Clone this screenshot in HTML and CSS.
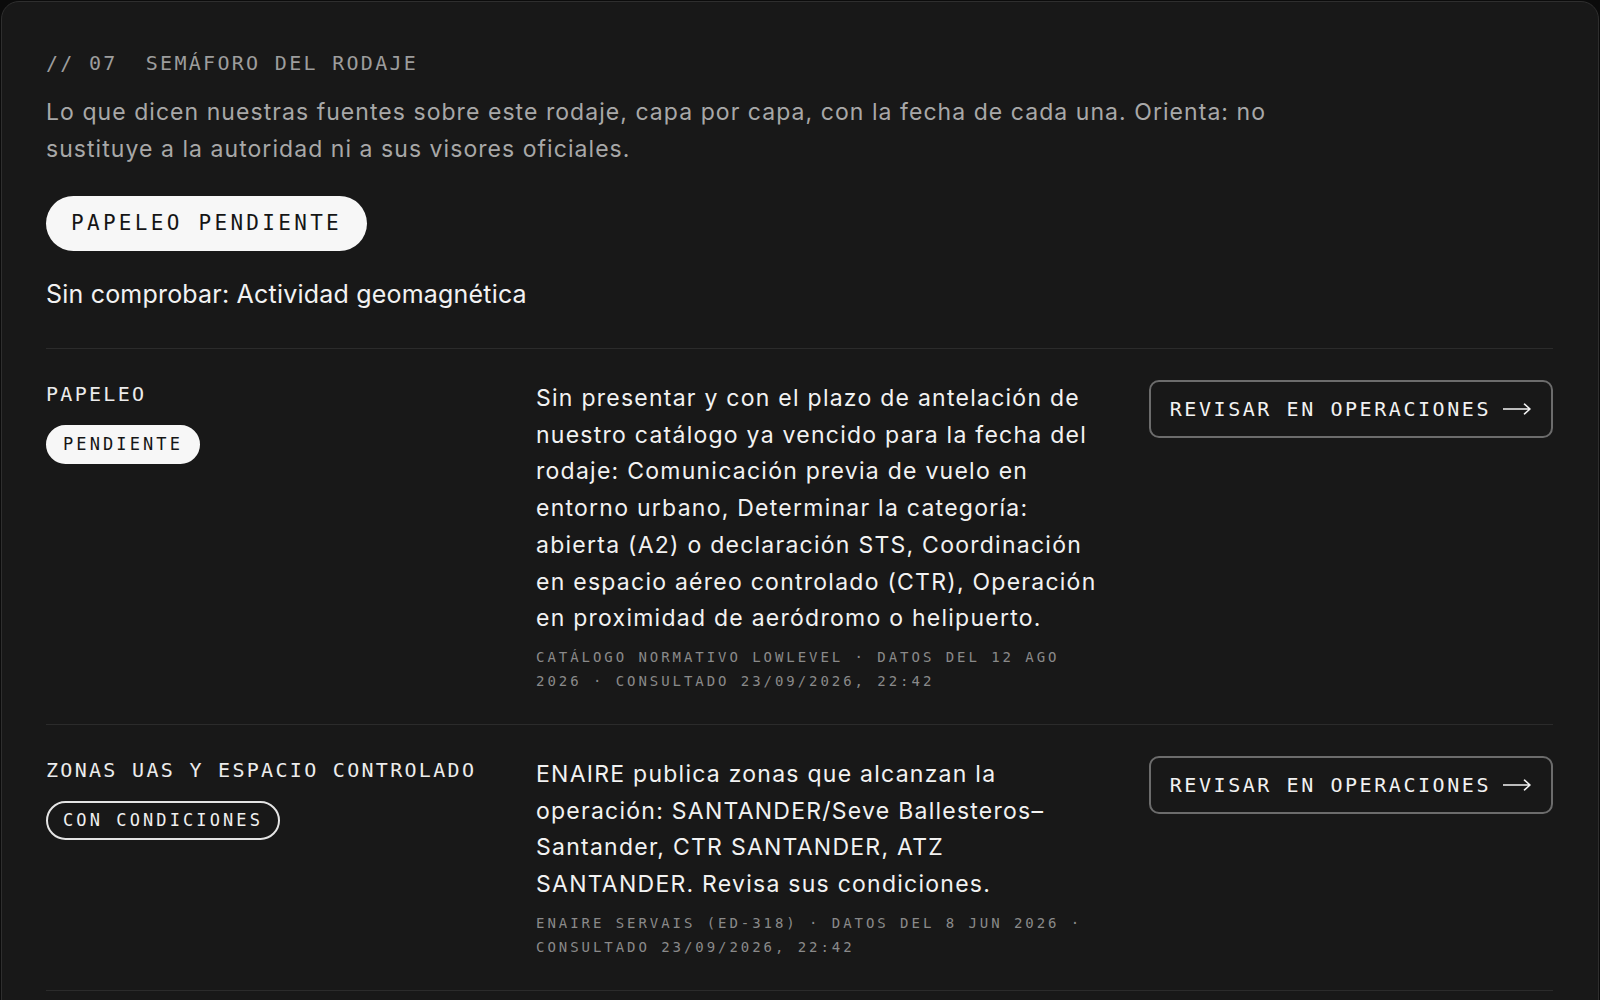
FILE: index.html
```html
<!DOCTYPE html>
<html lang="es">
<head>
<meta charset="utf-8">
<title>Semáforo del rodaje</title>
<link rel="stylesheet" href="styles.css">
</head>
<body>
<section class="card">
  <h2 class="eyebrow"><span>// 07</span><span>Semáforo del rodaje</span></h2>
  <p class="lede">Lo que dicen nuestras fuentes sobre este rodaje, capa por capa, con la fecha de cada una. Orienta: no sustituye a la autoridad ni a sus visores oficiales.</p>
  <div class="status"><span class="status-pill">Papeleo pendiente</span></div>
  <p class="unchecked">Sin comprobar: Actividad geomagnética</p>

  <div class="rows">
    <div class="row">
      <div class="row-head">
        <div class="row-label">Papeleo</div>
        <span class="tag tag-filled">Pendiente</span>
      </div>
      <div class="row-body">
        <p class="desc">Sin presentar y con el plazo de antelación de nuestro catálogo ya vencido para la fecha del rodaje: Comunicación previa de vuelo en entorno urbano, Determinar la categoría: abierta (A2) o declaración STS, Coordinación en espacio aéreo controlado (CTR), Operación en proximidad de aeródromo o helipuerto.</p>
        <p class="meta">Catálogo normativo LowLevel · datos del 12 ago 2026 · consultado 23/09/2026, 22:42</p>
      </div>
      <a class="action" href="#"><span>Revisar en operaciones</span><svg class="arrow" width="28" height="12" viewBox="0 0 28 12" aria-hidden="true"><path d="M0 6H27M21.5 1.2L27 6L21.5 10.8"/></svg></a>
    </div>

    <div class="row">
      <div class="row-head">
        <div class="row-label">Zonas UAS y espacio controlado</div>
        <span class="tag tag-outline">Con condiciones</span>
      </div>
      <div class="row-body">
        <p class="desc">ENAIRE publica zonas que alcanzan la operación: SANTANDER/Seve Ballesteros–Santander, CTR SANTANDER, ATZ SANTANDER. Revisa sus condiciones.</p>
        <p class="meta">ENAIRE servAIS (ED-318) · datos del 8 jun 2026 · consultado 23/09/2026, 22:42</p>
      </div>
      <a class="action" href="#"><span>Revisar en operaciones</span><svg class="arrow" width="28" height="12" viewBox="0 0 28 12" aria-hidden="true"><path d="M0 6H27M21.5 1.2L27 6L21.5 10.8"/></svg></a>
    </div>
  </div>
</section>
</body>
</html>
```

FILE: styles.css
```css
html, body {
  margin: 0;
  padding: 0;
  background: #0b0b0b;
}

body {
  padding: 1px;
  font-family: Inter, "Noto Sans", sans-serif;
}

.card {
  background: #181818;
  border: 1px solid #2e2e2e;
  border-radius: 18px;
  padding: 49px 45px 60px 44px;
}

.eyebrow {
  margin: 0;
  display: flex;
  gap: 28px;
  font-family: "DejaVu Sans Mono", "Liberation Mono", monospace;
  font-weight: normal;
  font-size: 20px;
  line-height: 24px;
  letter-spacing: 0.115em;
  text-transform: uppercase;
  color: #9d9d9d;
}

.lede {
  margin: 19px 0 0;
  max-width: 1300px;
  font-size: 23px;
  line-height: 36.5px;
  letter-spacing: 1.05px;
  color: #a8a8a8;
}

.status {
  margin-top: 29px;
}

.status-pill {
  display: inline-block;
  background: #f7f7f7;
  color: #151515;
  border-radius: 999px;
  padding: 15px 25px 15px 25px;
  font-family: "DejaVu Sans Mono", "Liberation Mono", monospace;
  font-size: 21px;
  line-height: 25px;
  letter-spacing: 3.3px;
  text-transform: uppercase;
}

.unchecked {
  margin: 25px 0 0;
  font-size: 25px;
  line-height: 36px;
  letter-spacing: 0.2px;
  color: #f2f2f2;
}

.rows {
  margin-top: 36px;
  border-bottom: 1px solid #2b2b2b;
}

.row {
  display: grid;
  grid-template-columns: 450px 1fr auto;
  column-gap: 40px;
  align-items: start;
  border-top: 1px solid #2b2b2b;
  padding: 31px 0 30px;
}

.row-label {
  font-family: "DejaVu Sans Mono", "Liberation Mono", monospace;
  font-size: 20px;
  line-height: 28px;
  letter-spacing: 0.115em;
  text-transform: uppercase;
  color: #ececec;
}

.tag {
  display: inline-block;
  margin-top: 17px;
  padding: 7px 15px;
  border: 2px solid #f2f2f2;
  border-radius: 999px;
  font-family: "DejaVu Sans Mono", "Liberation Mono", monospace;
  font-size: 17px;
  line-height: 21px;
  letter-spacing: 3.1px;
  text-transform: uppercase;
}

.tag-filled {
  background: #f7f7f7;
  border-color: #f7f7f7;
  color: #151515;
}

.tag-outline {
  background: transparent;
  color: #f0f0f0;
  border-color: #e4e4e4;
}

.desc {
  margin: 0;
  font-size: 23px;
  line-height: 36.7px;
  letter-spacing: 1.25px;
  color: #f2f2f2;
}

.meta {
  margin: 8px 0 0;
  font-family: "DejaVu Sans Mono", "Liberation Mono", monospace;
  font-size: 14px;
  line-height: 24.5px;
  letter-spacing: 2.95px;
  text-transform: uppercase;
  color: #8a8a8a;
}

.action {
  display: flex;
  align-items: center;
  gap: 12px;
  padding: 15px 20px 15px 19px;
  border: 2px solid #6c6c6c;
  border-radius: 10px;
  text-decoration: none;
  color: #f2f2f2;
  font-family: "DejaVu Sans Mono", "Liberation Mono", monospace;
  font-size: 20px;
  line-height: 24px;
  letter-spacing: 0.128em;
  text-transform: uppercase;
  white-space: nowrap;
}

.arrow {
  flex: none;
  fill: none;
  stroke: #f2f2f2;
  stroke-width: 1.6;
  stroke-linecap: round;
  stroke-linejoin: round;
}
```
